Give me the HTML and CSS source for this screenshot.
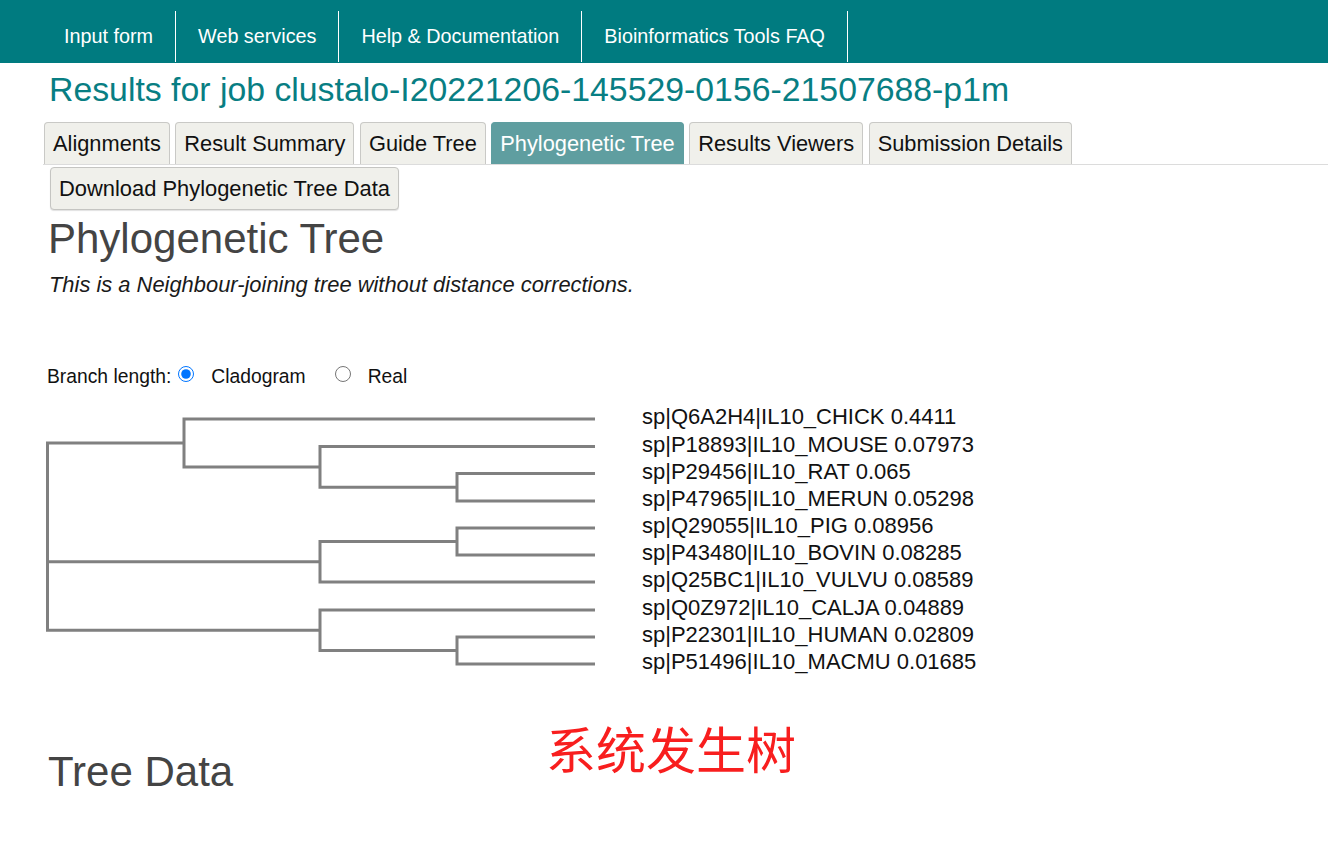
FILE: index.html
```html
<!DOCTYPE html>
<html lang="en">
<head>
<meta charset="utf-8">
<title>Results for job clustalo-I20221206-145529-0156-21507688-p1m</title>
<link rel="stylesheet" href="styles.css">
</head>
<body>
<nav class="topnav">
  <a class="nav-item" href="#">Input form</a>
  <a class="nav-item" href="#">Web services</a>
  <a class="nav-item" href="#">Help &amp; Documentation</a>
  <a class="nav-item" href="#">Bioinformatics Tools FAQ</a>
</nav>
<main class="page">
  <h1 class="job-title">Results for job clustalo-I20221206-145529-0156-21507688-p1m</h1>
  <ul class="tabs">
    <li class="tab">Alignments</li>
    <li class="tab">Result Summary</li>
    <li class="tab">Guide Tree</li>
    <li class="tab tab-active">Phylogenetic Tree</li>
    <li class="tab">Results Viewers</li>
    <li class="tab">Submission Details</li>
  </ul>
  <div class="actions">
    <button class="btn" type="button">Download Phylogenetic Tree Data</button>
  </div>
  <h2 class="section-title">Phylogenetic Tree</h2>
  <p class="note">This is a Neighbour-joining tree without distance corrections.</p>
  <div class="branch-row">
    <span class="branch-label">Branch length:</span>
    <input class="radio radio-first" type="radio" name="bl" id="bl-clado" checked>
    <label for="bl-clado" class="radio-text">Cladogram</label>
    <input class="radio radio-second" type="radio" name="bl" id="bl-real">
    <label for="bl-real" class="radio-text">Real</label>
  </div>
  <svg class="tree" width="960" height="280" viewBox="0 0 960 280">
    <g class="branches">
      <path d="M144 42.9 H7.5 V230.25 H280 M7.5 161.75 H280"/>
      <path d="M555 19 H144 V66.9 H280"/>
      <path d="M555 46.5 H280 V87.25 H417"/>
      <path d="M555 73.5 H417 V101 H555"/>
      <path d="M417 141.5 H280 V182 H555"/>
      <path d="M555 128 H417 V155 H555"/>
      <path d="M555 210 H280 V250.5 H417"/>
      <path d="M555 237 H417 V264 H555"/>
    </g>
    <g class="labels">
      <text x="602" y="24">sp|Q6A2H4|IL10_CHICK 0.4411</text>
      <text x="602" y="51.5">sp|P18893|IL10_MOUSE 0.07973</text>
      <text x="602" y="78.5">sp|P29456|IL10_RAT 0.065</text>
      <text x="602" y="106">sp|P47965|IL10_MERUN 0.05298</text>
      <text x="602" y="133">sp|Q29055|IL10_PIG 0.08956</text>
      <text x="602" y="160">sp|P43480|IL10_BOVIN 0.08285</text>
      <text x="602" y="187">sp|Q25BC1|IL10_VULVU 0.08589</text>
      <text x="602" y="215">sp|Q0Z972|IL10_CALJA 0.04889</text>
      <text x="602" y="242">sp|P22301|IL10_HUMAN 0.02809</text>
      <text x="602" y="269">sp|P51496|IL10_MACMU 0.01685</text>
    </g>
  </svg>
  <h2 class="section-title section-title-data">Tree Data</h2>
</main>
<div class="annotation">系统发生树</div>
</body>
</html>
```
FILE: styles.css
```css
html, body {
  margin: 0;
  padding: 0;
  background: #ffffff;
}
body {
  font-family: "Liberation Sans", Arial, sans-serif;
  color: #111111;
  width: 1328px;
  height: 841px;
  overflow: hidden;
}

/* Top navigation */
.topnav {
  display: flex;
  box-sizing: border-box;
  height: 63px;
  padding: 11px 0 0 42px;
  background: #007b80;
}
.nav-item {
  display: block;
  height: 51px;
  line-height: 50px;
  padding: 0 22px;
  border-right: 1px solid #ffffff;
  color: #ffffff;
  font-size: 19.8px;
  text-decoration: none;
  white-space: nowrap;
}

/* Page */
.page {
  display: block;
}
.job-title {
  margin: 6px 0 0 49px;
  font-size: 33.8px;
  line-height: 40px;
  font-weight: normal;
  color: #087e83;
  white-space: nowrap;
}

.tabs {
  display: flex;
  gap: 5.5px;
  list-style: none;
  margin: 13px 0 0 43px;
  padding: 0 0 0 1px;
  border-bottom: 1px solid #dcdcdc;
}
.tab {
  box-sizing: border-box;
  height: 42px;
  line-height: 41px;
  padding: 0 8px;
  font-size: 21.8px;
  color: #111111;
  background: #f0f0eb;
  border: 1px solid #c9c9c6;
  border-bottom: 0;
  border-radius: 4px 4px 0 0;
  white-space: nowrap;
}
.tab-active {
  background: #5f9ea0;
  border-color: #5f9ea0;
  color: #ffffff;
}

.actions {
  margin: 2px 0 0 50px;
}
.btn {
  box-sizing: border-box;
  height: 43px;
  line-height: 41px;
  padding: 0 8px;
  font-family: "Liberation Sans", Arial, sans-serif;
  font-size: 21.9px;
  color: #111111;
  background: #f0f0eb;
  border: 1px solid #c5c5c2;
  border-radius: 4px;
  box-shadow: 0 1px 1px rgba(0, 0, 0, 0.12);
  display: block;
}

.section-title {
  margin: 5px 0 0 48px;
  font-size: 42px;
  line-height: 48px;
  font-weight: normal;
  color: #444444;
}
.section-title-data {
  margin-top: 68px;
}

.note {
  margin: 9px 0 0 49px;
  font-size: 21.9px;
  line-height: 26px;
  font-style: italic;
  color: #1a1a1a;
}

.branch-row {
  display: flex;
  align-items: flex-start;
  height: 22px;
  margin: 68px 0 0 47px;
  font-size: 19.3px;
  line-height: 22px;
  color: #111111;
}
.radio {
  box-sizing: border-box;
  width: 16px;
  height: 16px;
  margin: 0;
}
.radio-first {
  margin-left: 7px;
  margin-right: 17px;
}
.radio-second {
  margin-left: 29px;
  margin-right: 17px;
}

.tree {
  display: block;
  margin: 12px 0 0 40px;
}
.branches path {
  fill: none;
  stroke: #808080;
  stroke-width: 3;
  stroke-linejoin: miter;
}
.labels text {
  font-family: "Liberation Sans", Arial, sans-serif;
  font-size: 22px;
  fill: #111111;
}

.annotation {
  position: absolute;
  left: 546px;
  top: 722px;
  font-family: "Noto Sans CJK SC", sans-serif;
  font-size: 50px;
  line-height: 50px;
  color: #f81e1e;
  white-space: nowrap;
}
```
